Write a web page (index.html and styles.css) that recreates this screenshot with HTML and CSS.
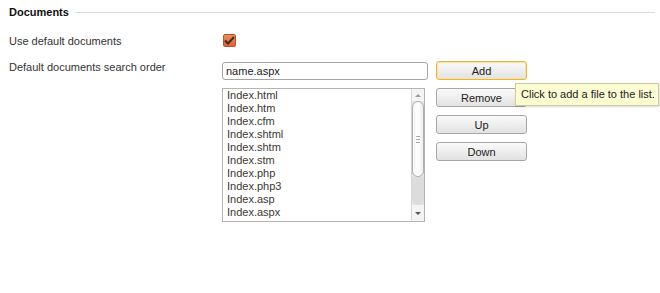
FILE: index.html
```html
<!DOCTYPE html>
<html>
<head>
    <title>Documents</title>
    <link rel="stylesheet" href="styles.css">
</head>
<body>
    <div class="panel">
        <div class="section-head">
            <span class="section-title">Documents</span>
            <span class="section-line"></span>
        </div>

        <div class="row row-check">
            <label class="row-label">Use default documents</label>
            <span class="checkbox">
                <svg width="11" height="9" viewBox="0 0 11 9">
                    <path d="M1 4.5 L4 7.5 L10 1" fill="none" stroke="#3a2a22" stroke-width="2"/>
                </svg>
            </span>
        </div>

        <div class="row row-docs">
            <label class="row-label">Default documents search order</label>
            <div class="docs">
                <div class="docs-left">
                    <input type="text" class="text-input" value="name.aspx">
                    <div class="listbox">
                        <ul class="list-items">
                            <li>Index.html</li>
                            <li>Index.htm</li>
                            <li>Index.cfm</li>
                            <li>Index.shtml</li>
                            <li>Index.shtm</li>
                            <li>Index.stm</li>
                            <li>Index.php</li>
                            <li>Index.php3</li>
                            <li>Index.asp</li>
                            <li>Index.aspx</li>
                        </ul>
                        <div class="scrollbar">
                            <div class="sb-arrow sb-up"></div>
                            <div class="sb-thumb"><span class="sb-grip"></span></div>
                            <div class="sb-track"></div>
                            <div class="sb-arrow sb-down"></div>
                        </div>
                    </div>
                </div>
                <div class="buttons">
                    <button type="button" class="btn btn-focus">Add</button>
                    <button type="button" class="btn">Remove</button>
                    <button type="button" class="btn">Up</button>
                    <button type="button" class="btn">Down</button>
                    <div class="tooltip">Click to add a file to the list.</div>
                </div>
            </div>
        </div>
    </div>
</body>
</html>
```

FILE: styles.css
```css
body {
    margin: 0;
    background: #fff;
    font-family: "Liberation Sans", Arial, sans-serif;
    font-size: 11px;
    color: #333;
}
.panel {
    padding: 5px 5px 0 9px;
}
.section-head {
    display: flex;
    align-items: center;
    gap: 6px;
    height: 14px;
}
.section-title {
    font-weight: bold;
    color: #111;
}
.section-line {
    flex: 1;
    height: 1px;
    background: #dcdcdc;
}
.row {
    display: grid;
    grid-template-columns: 213px auto;
    align-items: start;
}
.row-label {
    line-height: 13px;
}
.row-check {
    margin-top: 15px;
}
.row-check .row-label {
    margin-top: 1px;
}
.checkbox {
    width: 11px;
    height: 11px;
    margin-left: 1px;
    border: 1px solid #b4532c;
    border-radius: 2px;
    background: linear-gradient(#f08a5c, #e0622f);
    display: flex;
    align-items: center;
    justify-content: center;
}
.checkbox svg {
    margin-top: -1px;
}
.row-docs {
    margin-top: 13px;
}
.docs {
    display: flex;
    gap: 8px;
    position: relative;
}
.docs-left {
    display: flex;
    flex-direction: column;
    gap: 8px;
    margin-top: 1px;
}
.text-input {
    box-sizing: border-box;
    width: 206px;
    height: 18px;
    margin: 0;
    padding: 0 3px;
    border: 1px solid #a4a4a4;
    border-radius: 3px;
    font-family: inherit;
    font-size: 11px;
    color: #222;
}
.listbox {
    box-sizing: border-box;
    width: 203px;
    height: 134px;
    border: 1px solid #b4b4b4;
    display: flex;
}
.list-items {
    flex: 1;
    margin: 0;
    padding: 0 4px;
    list-style: none;
    line-height: 13px;
    color: #3d3832;
}
.scrollbar {
    width: 12px;
    display: flex;
    flex-direction: column;
    background: #e4e4e4;
    border-left: 1px solid #d6d6d6;
}
.sb-arrow {
    height: 12px;
    background: #f4f4f4;
    display: flex;
    align-items: center;
    justify-content: center;
}
.sb-up::after {
    content: "";
    border: 3px solid transparent;
    border-bottom: 3px solid #999;
    border-top: none;
}
.sb-down {
    height: 16px;
}
.sb-down::after {
    content: "";
    border: 3px solid transparent;
    border-top: 3px solid #555;
    border-bottom: none;
}
.sb-thumb {
    height: 76px;
    box-sizing: border-box;
    border: 1px solid #b0b0b0;
    border-radius: 6px;
    background: linear-gradient(90deg, #f6f6f6, #fff 50%, #ececec);
    display: flex;
    align-items: center;
    justify-content: center;
}
.sb-grip {
    width: 4px;
    height: 5px;
    border-top: 1px solid #aaa;
    border-bottom: 1px solid #aaa;
    background: linear-gradient(#fff 40%, #aaa 40%, #aaa 60%, #fff 60%);
}
.sb-track {
    flex: 1;
    background: #dcdcdc;
    border-radius: 0 0 6px 6px;
}
.buttons {
    display: flex;
    flex-direction: column;
    gap: 8px;
}
.btn {
    box-sizing: border-box;
    width: 91px;
    height: 19px;
    padding: 0;
    border: 1px solid #a6a6a6;
    border-radius: 3px;
    background: linear-gradient(#fafafa, #e2e2e2);
    font-family: inherit;
    font-size: 11px;
    color: #222;
}
.btn-focus {
    border-color: #e7b640;
    box-shadow: inset 0 0 0 1px #fbe3a3;
}
.tooltip {
    position: absolute;
    left: 293px;
    top: 22px;
    padding: 4px 3px 4px 5px;
    background: #fcfcd2;
    border: 1px solid #cfcb98;
    box-shadow: 1px 1px 2px rgba(0,0,0,0.15);
    line-height: 13px;
    white-space: nowrap;
    color: #222;
}
```
